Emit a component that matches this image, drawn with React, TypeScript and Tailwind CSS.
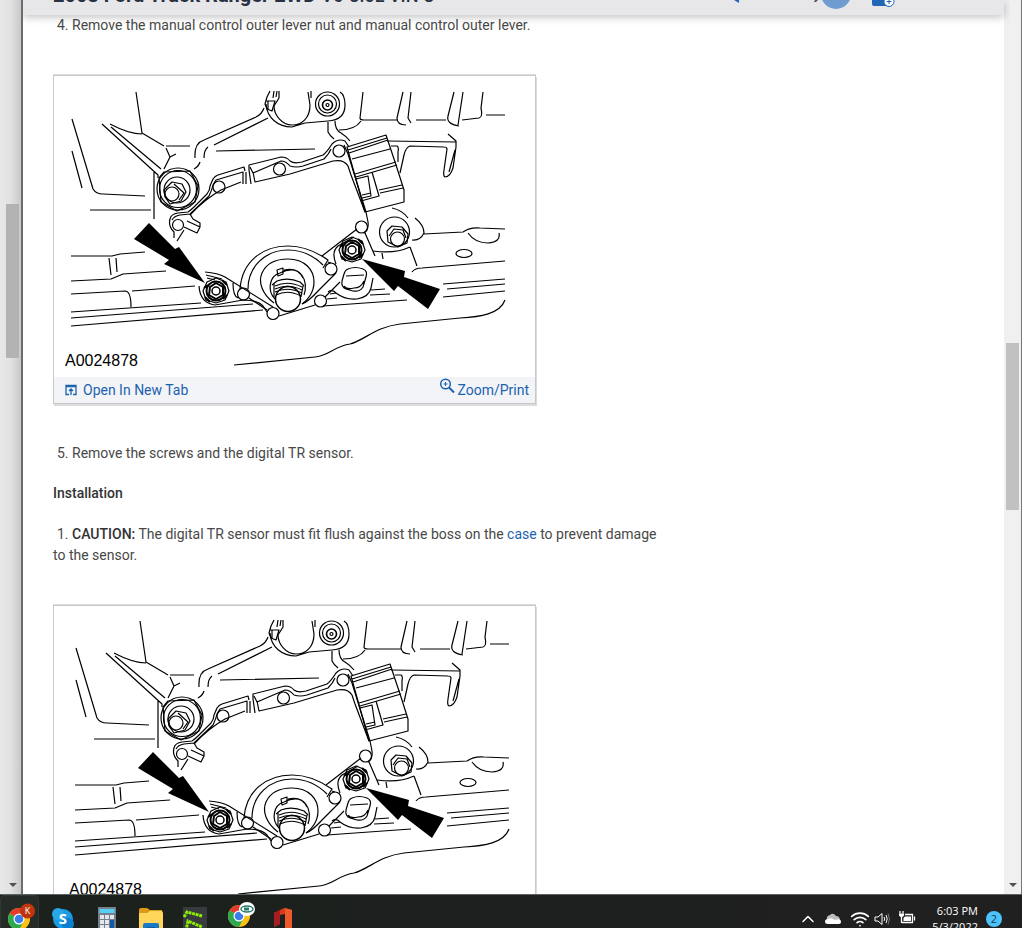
import type { ReactNode } from 'react';
import { ChevronUp, Wifi } from 'lucide-react';

function Bolt({ x, y }: { x: number; y: number }) {
    return (
        <g transform={`translate(${x} ${y})`}>
            <path d="M-9 -9L0 -13L10 -9L13 0L9 9L0 12L-10 9L-13 0Z" />
            <circle r="9.5" strokeWidth="2" />
            <path d="M-6 -4L0 -8L7 -4V4L0 8L-7 4Z" strokeWidth="2" />
            <circle r="4" strokeWidth="1.5" />
            <path d="M-11 6L-6 11M6 -11L11 -6M-12 -3L-8 -6M7 8L11 4" strokeWidth="2" />
        </g>
    );
}

function SensorDiagram({ viewBox, label }: { viewBox: string; label: string }) {
    return (
        <svg viewBox={viewBox} className="block w-full" role="img" aria-label={label}>
            <g fill="none" stroke="#000" strokeWidth="1.2" strokeLinejoin="round">
                {/* transmission case, upper left */}
                <path d="M136 92L142 133L164 146M110 124Q129 134 142 134M72 119L93 189Q96 194 103 194L145 196M72 151L82 188" />
                <path d="M102 124L158 175V178M111 127L161 169M90 210H151M154 172V219M166 146H190M166 148L170 157L176 154M170 157L164 169" />
                <path d="M195 158Q194 143 204 140L256 117Q262 114 264 108M194 169Q199 166 200 162M204 158Q204 150 208 147M214 145L268 118M216 151L315 149" />

                {/* upper boss */}
                <path d="M308 92L310 105C310 118 302 125 292 125C282 125 274 115 274 106L279 98V91M266 104C267 118 278 127 292 127L305 123L328 121Q345 120 345 105Q345 95 340 92" />
                <path d="M270 91L267 97L265 104L267 109L272 111L275 101H266M268 101V109M274 91L273 98M277 91L276 97M311 91V98" />
                <circle cx="327.5" cy="104" r="12" />
                <circle cx="327.5" cy="104" r="9" />
                <circle cx="327.5" cy="105" r="5" strokeWidth="1.6" />
                <circle cx="327.5" cy="105" r="1.5" />
                <path d="M328 122V132Q330 136 334 139M335 121Q335 130 341 133Q346 136 350 141M339 130Q355 130 361 121" />

                {/* ribs */}
                <path d="M363 92L360 118Q360 120 364 120L397 120M403 92L397 118Q397 125 406 125M411 92L408 118L411 123" />
                <path d="M416 120H446M454 92L448 116Q446 124 459 126M463 92L458 125M462 120L479 118Q483 117 481 108L483 92M486 115H505" />
                <path d="M387 141L456 142M448 134L456 141V147L453 168Q450 177 445 177Q443 176 444 170L447 149Q447 147 444 147L410 146Q406 147 404 155L400 173M391 146H397Q399 147 398 152V162M455 150L449 172" />

                {/* bolt, upper left */}
                <circle cx="178" cy="189" r="21" />
                <circle cx="178" cy="189" r="18.5" />
                <circle cx="177" cy="190" r="13" />
                <path d="M159 178L164 172L190 171L198 186L195 202L177 211L161 202Z" />
                <path d="M164 190L172 182L182 184L186 192L181 201L170 204L165 197ZM174 184L184 193L179 200" />
                <circle cx="172" cy="194" r="7" />

                {/* sensor plate */}
                <path d="M174 238V232Q168 226 170 219Q171 214 178 213L188 212Q191 210 194 207L207 194Q210 190 210 186L213 179Q215 176 218 175L244 167L245 171M249 170V165L281 157Q287 157 290 161Q294 164 302 162L323 155Q327 152 332 144Q338 138 345 141L349 147" />
                <path d="M172 220Q174 216 180 215L190 214L209 196Q212 190 213 185L216 180L243 172V184M250 167L253 173L281 161Q286 161 290 166Q296 168 303 166L324 159Q329 154 331 149M246 172V184M249 170L251 184M253 172L255 182L290 174L333 161Q344 159 348 166L351 175L365 212M241 182L221 190Q205 199 190 215" />
                <path d="M344 145L348 154L366 212L368 222Q369 230 364 233M357 229L322 256M354 237L338 246Q331 252 336 264M365 233L375 256" />
                <path d="M187 221L200 227L197 233L184 227M190 214L193 219L200 223V227M184 230L177 241" />
                <circle cx="178" cy="225" r="5.5" />
                <circle cx="219" cy="187" r="6" />
                <circle cx="279.5" cy="169" r="6" />
                <circle cx="339" cy="151" r="6" />
                <circle cx="361.5" cy="227" r="6" />
                <circle cx="331" cy="269" r="6" />
                <circle cx="320.5" cy="301" r="6" />
                <circle cx="273" cy="313.5" r="6" />
                <circle cx="243.5" cy="294" r="6" />
                <path d="M249 298L267 310M279 316L315 305M325 297L340 282M328 262L331 263M336 273L319 290Q308 302 302 304" />

                {/* connector */}
                <path d="M347 147L386 135L397 168L404 190V202L365 212ZM348 150L387 138M349 153L388 140M352 159L390 149M355 174L396 162M356 177L397 165M356 179L368 176L371 196L362 198M361 201L379 196L372 172M379 190L402 185M380 193L403 188M362 195L371 193" />

                {/* manual lever shaft */}
                <path d="M240 289C242 262 262 246 288 246C305 246 318 253 328 260L323 268M248 289C248 266 266 250 288 250C303 250 315 257 323 265" />
                <path d="M274 303C262 294 258 282 262 273C267 262 278 259 288 259C305 259 314 270 314 282C314 292 308 300 302 304" />
                <path d="M275 299C267 291 269 276 280 273C301 263 309 281 304 295M277 270L283 268V274L278 276ZM284 270Q298 267 303 278M272 285L277 281Q288 277 300 282L304 286" />
                <path d="M274 284V297M303 286L301 297M275 286Q288 280 302 287M275 289Q288 283 302 290M275 292Q288 286 302 293M276 295Q288 289 301 296" />
                <circle cx="288" cy="299" r="12.5" strokeWidth="1.5" />
                <path d="M199 286Q200 303 215 305L243 300Q258 300 263 306L267 312M205 272Q218 273 225 277L273 307M206 275L222 279M207 278L215 280M233 283Q233 296 238 298" />

                {/* right boss and pan */}
                <path d="M328 292Q332 289 336 293Q345 300 357 299Q369 297 371 288L373 278M348 269Q355 266 363 269Q368 271 366 277L363 287Q360 292 353 291L346 289Q341 287 342 281L344 274Q345 270 348 269ZM346 276L364 275M344 286Q347 290 354 288Q361 288 364 281" />
                <circle cx="394.5" cy="232" r="15" />
                <path d="M387 231L392 226L402 227L408 234L407 243L398 247L388 242ZM389 236L394 229L403 230L406 238" />
                <circle cx="397.5" cy="239" r="7" />
                <path d="M392 208Q402 210 408 218M415 218Q424 225 424 233Q420 241 412 240M410 247L417 266M373 251Q395 254 410 247M382 253L383 259M424 234L463 232Q470 227 480 228L505 229M468 233Q475 243 488 243Q501 242 499 233M412 272Q415 268 422 268L505 261M443 284L505 279M447 289L505 284M443 297L505 291" />
                <ellipse cx="464" cy="253.5" rx="8" ry="4" />
                <path d="M323 306L407 300M371 290L385 289M370 295L390 294M330 294L336 293M327 299L337 298M505 300C500 314 480 317 460 318L400 324C375 327 365 340 350 344C335 346 328 356 315 357L234 365" />

                {/* pan rail, lower left */}
                <path d="M71 256H112L120 254L145 252M71 281L111 279L123 274L166 271M109 258L111 275M116 258L117 272M71 294L125 291Q131 291 131 307M132 291L195 286M71 312L201 303M71 318L253 304M71 326L263 310" />
                <Bolt x={216} y={291} />
                <Bolt x={352} y={250} />
            </g>
            <path d="M149 223L175 249L179 247L205 283L164 264L169 260L134 239ZM362 259L405 271L404 277L440 289L428 309L398 286L394 291Z" />
            <text x="65" y="366" className="font-['Liberation_Sans',sans-serif] text-[16px]">
                A0024878
            </text>
        </svg>
    );
}

function Figure({ viewBox, label }: { viewBox: string; label: string }) {
    return (
        <figure className="w-[483px] max-w-full border border-[#c8c8c8] bg-white shadow-[1px_2px_0_#dcdcdc,0_-1px_0_#dcdcdc]">
            <SensorDiagram viewBox={viewBox} label={label} />
            <figcaption className="flex h-[26px] items-center justify-between bg-[#f2f4f8] pr-1.5 pl-[11px] text-[#1c62ae]">
                <a href="#tab" className="flex items-center gap-1.5">
                    <svg viewBox="0 0 12 12" className="size-3" fill="none" stroke="currentColor">
                        <path d="M4 10.5H1V1.500H11V10.5H8M1 2.500H11M6 11V5M4 7L6 5L8 7" strokeWidth="1.3" />
                    </svg>
                    Open In New Tab
                </a>
                <a href="#zoom" className="flex items-center gap-0.5">
                    <svg viewBox="0 0 16 16" className="mb-2 size-4" fill="none" stroke="currentColor">
                        <circle cx="6.500" cy="6" r="4.8" strokeWidth="1.5" />
                        <path d="M10 9.500L15 14.500" strokeWidth="2" />
                        <path d="M4.500 6H8.500M6.500 4V8" />
                    </svg>
                    Zoom/Print
                </a>
            </figcaption>
        </figure>
    );
}

function ScrollArrow() {
    return (
        <svg viewBox="0 0 8 4" className="h-1 w-2" fill="#505050">
            <path d="M0 0H8L4 4Z" />
        </svg>
    );
}

function ChromeIcon({ children }: { children: ReactNode }) {
    return (
        <svg viewBox="0 0 30 28" className="h-7 w-[30px]">
            <circle cx="12" cy="16" r="11" fill="#fbc116" />
            <path d="M12 16L2.500 10.500A11 11 0 0 1 21.500 10.500H12Z" fill="#e33b2e" />
            <path d="M12 16L2.500 10.500A11 11 0 0 0 12 27L16.500 18.500Z" fill="#2da94f" />
            <circle cx="12" cy="16" r="5.5" fill="#fff" />
            <circle cx="12" cy="16" r="4.3" fill="#3b7de9" />
            {children}
        </svg>
    );
}

function Taskbar() {
    return (
        <footer className="flex h-[34px] shrink-0 items-start justify-between overflow-hidden border-t border-[#5d625e] bg-linear-to-r from-[#1b211d] to-[#202020] font-['Open_Sans',sans-serif] text-white">
            <div className="flex items-start">
                <button type="button" aria-label="Chrome, profile K" className="h-10 w-[39px] rounded-sm border border-[#303633] bg-[#252b27] pt-1 pl-1.5">
                    <ChromeIcon>
                        <circle cx="20.5" cy="8" r="7.5" fill="#bf360c" />
                        <text x="20.5" y="11" textAnchor="middle" fill="#fff" className="text-[9px]">
                            K
                        </text>
                    </ChromeIcon>
                </button>
                <button type="button" aria-label="Skype" className="mt-3 ml-3">
                    <svg viewBox="0 0 24 24" className="size-6">
                        <circle cx="12" cy="12" r="10" fill="#1a9be6" />
                        <circle cx="7" cy="7" r="6" fill="#28a8ea" />
                        <circle cx="17" cy="17" r="6" fill="#0b7fd0" />
                        <text x="12" y="17" textAnchor="middle" fill="#fff" className="text-[15px] font-bold">
                            S
                        </text>
                    </svg>
                </button>
                <button type="button" aria-label="Calculator" className="mt-3 ml-[23px]">
                    <svg viewBox="0 0 18 24" className="h-6 w-[18px]">
                        <path d="M0 0H18V24H0Z" fill="#76808c" />
                        <path d="M1.500 2H16.500V6H1.500Z" fill="#55d0f5" />
                        <path d="M2 8H6V12H2ZM7 8H11V12H7ZM12 8H16V12H12ZM2 13H6V17H2ZM7 13H11V17H7ZM2 18H6V22H2ZM7 18H11V22H7Z" fill="#e2e7ec" />
                        <path d="M12 13H16V24H12Z" fill="#1257a8" />
                    </svg>
                </button>
                <button type="button" aria-label="File Explorer" className="mt-3 ml-[22px]">
                    <svg viewBox="0 0 26 24" className="h-6 w-[26px]">
                        <path d="M1 3Q1 1 3 1H9L12 3H24V12H1Z" fill="#dc9a16" />
                        <path d="M1 6H9L12 4H23Q25 4 25 6V24H1Z" fill="#ffd55c" />
                        <path d="M5 24V18Q5 16 7 16H19Q21 16 21 18V24Z" fill="#1a78c9" />
                        <path d="M9 20H17V24H9Z" fill="#125a9e" />
                    </svg>
                </button>
                <button type="button" aria-label="Terminal" className="mt-3 ml-[19px]">
                    <svg viewBox="0 0 24 24" className="size-6">
                        <path d="M0 0H24V24H0Z" fill="#383b3d" />
                        <path d="M1 10L4 5L19 9M3 24L5 14L19 20" fill="none" stroke="#8cf000" strokeWidth="3" strokeDasharray="3 0.7" />
                    </svg>
                </button>
                <button type="button" aria-label="Chrome" className="mt-[5px] ml-5">
                    <ChromeIcon>
                        <ellipse cx="20" cy="9" rx="8" ry="7" fill="#fff" />
                        <ellipse cx="20" cy="9" rx="6" ry="3" fill="none" stroke="#287d6b" strokeWidth="1.5" />
                        <path d="M17 7.500H22V10.500H17Z" fill="#287d6b" />
                    </ChromeIcon>
                </button>
                <button type="button" aria-label="Office" className="mt-3 ml-4">
                    <svg viewBox="0 0 20 24" className="h-6 w-5">
                        <path d="M1 6L11 1L19 3V24H12V7L7 8V17L1 20Z" fill="#d83b1c" />
                        <path d="M12 1L19 3V24H12Z" fill="#ef5a2c" />
                        <path d="M1 6L7 3V17L1 20Z" fill="#a51d20" />
                    </svg>
                </button>
            </div>

            <div className="flex items-start pr-5">
                <button type="button" aria-label="Show hidden icons" className="mt-3.5">
                    <ChevronUp className="size-5" strokeWidth={1.8} />
                </button>
                <button type="button" aria-label="OneDrive" className="mt-[18px] ml-1.5">
                    <svg viewBox="0 0 18 12" className="h-3 w-[18px]">
                        <path d="M3 7Q2 3 6 2Q9 -1 12 3Q16 3 16 8L9 11Z" fill="#bdbdbd" />
                        <path d="M4 11Q1 11 1 8.500Q1 6 4 6Q7 4 11 7Q17 5 17 9Q17 11 15 11Z" fill="#fff" />
                    </svg>
                </button>
                <button type="button" aria-label="Network" className="mt-3.5 ml-2">
                    <Wifi className="size-5" strokeWidth={2} />
                </button>
                <button type="button" aria-label="Volume" className="mt-4 ml-1">
                    <svg viewBox="0 0 16 16" className="size-4" fill="none" stroke="#fff">
                        <path d="M1 6H4L8 2.500V13.500L4 10H1ZM10 6Q11.500 8 10 10M12 4Q14.500 8 12 12" />
                        <path d="M14 2.500Q17 8 14 13.500" stroke="#777" />
                    </svg>
                </button>
                <button type="button" aria-label="Battery" className="mt-[15px] ml-2">
                    <svg viewBox="0 0 18 16" className="h-4 w-[18px]" fill="none" stroke="#fff">
                        <path d="M7 4.500H14.500V12.500H4M16.500 6.500V10.500M2 1V3.500M5 1V3.500M3.500 7V13" strokeWidth="1.3" />
                        <path d="M1 3.500H6V5.500Q3.500 9 1 5.500ZM7 6.500H13V11H5.500V8Z" fill="#fff" stroke="none" />
                    </svg>
                </button>
                <button type="button" className="mt-2 ml-4 text-right text-[11px] leading-4">
                    6:03 PM
                    <br />
                    5/3/2022
                </button>
                <button type="button" aria-label="2 notifications" className="mt-4 ml-2 size-4 rounded-full bg-[#4cc2ff] text-[11px] leading-4 text-[#14394c]">
                    2
                </button>
            </div>
        </footer>
    );
}

export default function App() {
    return (
        <div className="flex h-screen flex-col overflow-hidden bg-white font-[Roboto,sans-serif] text-[14px] leading-[21px] text-[#484848]">
            <div className="flex min-h-0 flex-1 border-r border-[#777]">
                <div className="flex w-[23px] shrink-0 flex-col items-center justify-between border-r-2 border-[#6c6c6c] bg-linear-to-r from-[#e8e8e8] via-[#e2e2e2] to-[#c9c9c9] pt-[204px] pb-[7px] pl-1">
                    <div className="h-[154px] w-[13px] bg-[#b3b3b3]" />
                    <ScrollArrow />
                </div>

                <main className="flex min-w-0 flex-1 flex-col">
                    <header className="z-10 flex h-[15px] shrink-0 items-end justify-between overflow-hidden bg-[#e7e7ea] pr-[50px] pl-[30px] shadow-[0_2px_8px_#00000040] [clip-path:inset(0_-6px_-12px_0)]">
                        <h1 className="mb-[7px] text-[20px] leading-6 font-bold whitespace-nowrap text-[#273142]">
                            2003 Ford Truck Ranger 2WD <span className="text-[18px] font-medium">V6-3.0L VIN U</span>
                        </h1>
                        <svg viewBox="0 0 220 15" className="h-[15px] w-[220px]">
                            <path d="M0 0H5V3Z" fill="#1f66b5" />
                            <path d="M81 0H84L82 2H80Z" fill="#555" />
                            <circle cx="102" cy="-6" r="15" fill="#6f9bd1" />
                            <path d="M138 0H157V6H140Q138 6 138 4Z" fill="#1f66b5" />
                            <circle cx="155" cy="1.5" r="5" fill="#fff" stroke="#1f66b5" />
                            <path d="M152.500 1.500H157.500M155 -1V4" stroke="#1f66b5" />
                        </svg>
                    </header>

                    <article className="min-h-0 flex-1 overflow-hidden pl-[30px]">
                        <p className="mb-[39px] pl-1">4. Remove the manual control outer lever nut and manual control outer lever.</p>
                        <Figure viewBox="54 76 481 301" label="Digital TR sensor screws, removal" />
                        <p className="mt-[39px] pl-1">5. Remove the screws and the digital TR sensor.</p>
                        <h2 className="mt-[19px] font-medium text-[#333]">Installation</h2>
                        <p className="mt-5 mb-[39px] max-w-[616px] indent-1">
                            1. <strong className="font-medium text-[#333]">CAUTION:</strong> The digital TR sensor must fit flush against the boss on the{' '}
                            <a href="#case" className="text-[#1c62ae]">
                                case
                            </a>{' '}
                            to prevent damage to the sensor.
                        </p>
                        <Figure viewBox="50 77 481 301" label="Digital TR sensor screws, installation" />
                    </article>
                </main>

                <div className="flex w-[17px] shrink-0 flex-col items-center justify-between bg-[#f0f0f0] pt-[343px] pb-[7px]">
                    <div className="h-[167px] w-[13px] bg-[#c1c1c1]" />
                    <ScrollArrow />
                </div>
            </div>
            <Taskbar />
        </div>
    );
}
